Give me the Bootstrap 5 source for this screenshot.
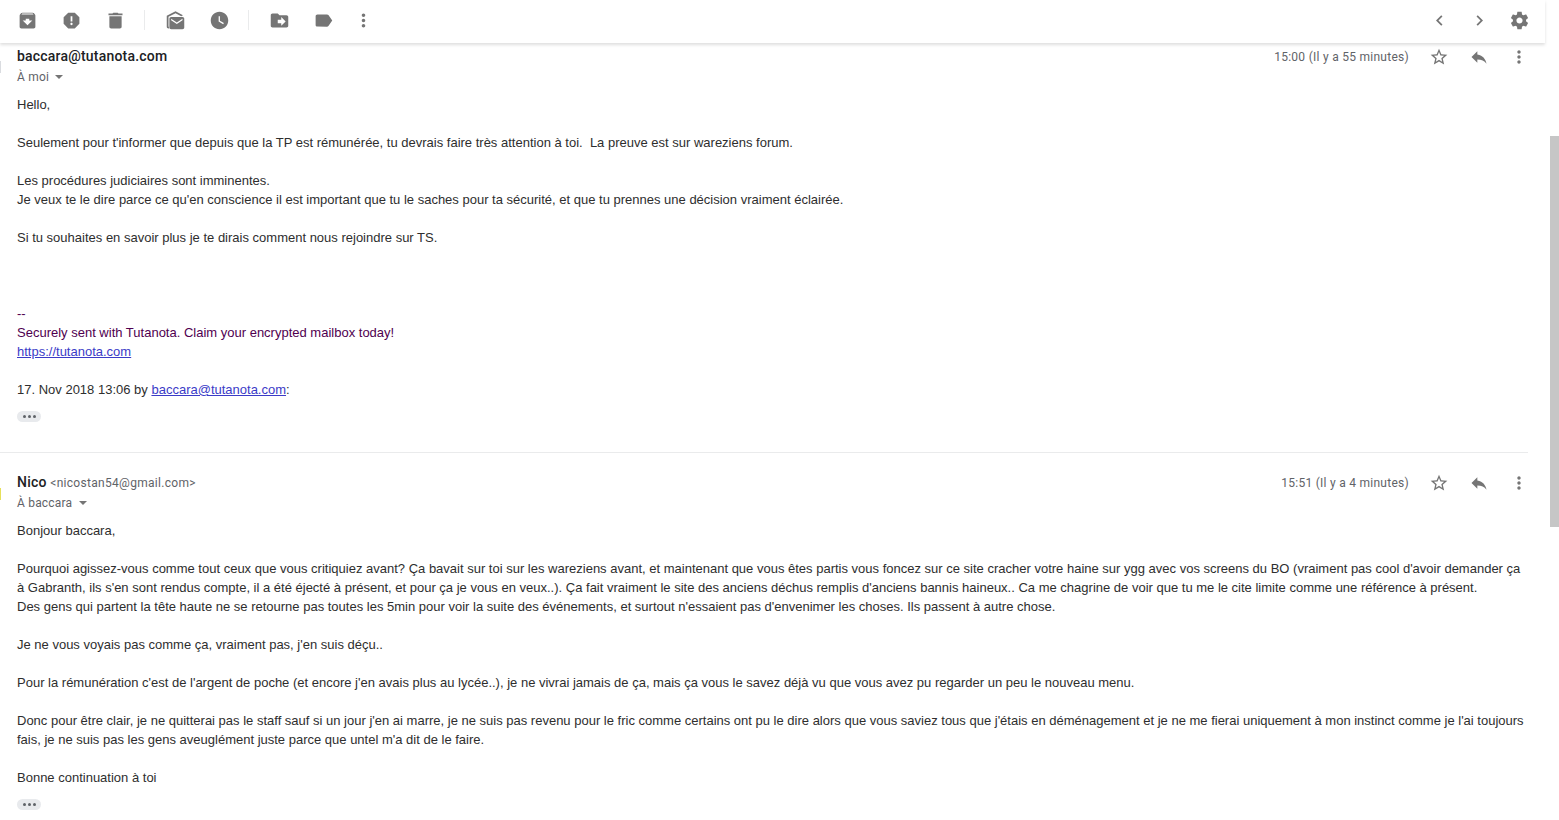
<!DOCTYPE html>
<html lang="fr">

<head>
    <meta charset="UTF-8">
    <title>Boîte de réception</title>
    <meta name="viewport" content="width=device-width, initial-scale=1" />
    <link href="https://cdn.jsdelivr.net/npm/bootstrap@5.3.0/dist/css/bootstrap.min.css" rel="stylesheet">
    <style>
        html, body { height: 100%; overflow: hidden; background: #fff; }
        body { font-family: Roboto, "Liberation Sans", sans-serif; font-size: 12px; color: #222; }
        svg { fill: #757575; display: block; }

        .mail-view { width: 1550px; height: 820px; overflow: hidden; }
        .tool-bar { width: 1545px; height: 43px; padding: 0 6px 3px 7px; box-shadow: 0 2px 3px rgba(0, 0, 0, .13); position: relative; z-index: 2; flex: none; }
        .tool-btn { width: 40px; height: 40px; }
        .tool-btn svg { width: 21px; height: 21px; }
        .tool-gap { margin-right: 4px; }
        .tool-sep { width: 1px; height: 20px; background: #eaebec; margin: 0 10px 0 9px; }

        .mail-item { width: 1528px; position: relative; }
        .mail-first { padding: 3px 0 29px 17px; height: 410px; border-bottom: 1px solid #eaebec; }
        .mail-second { padding: 19px 0 0 17px; }
        .side-mark { position: absolute; left: 0; width: 1px; height: 12px; }
        .mark-grey { top: 18px; background: #dadce0; }
        .mark-yellow { top: 35px; background: #e6e05a; }

        .head-row { height: 20px; margin-right: -11px; }
        .sender { font-size: 14px; font-weight: 500; color: #202124; line-height: 20px; letter-spacing: .2px; }
        .sender-mail { font-size: 12px; color: #5f6368; letter-spacing: .3px; margin-left: 0; font-weight: 400; }
        .mail-time { font-size: 12px; color: #5f6368; letter-spacing: .27px; margin: 1px 10px 0 0; }
        .head-btn { width: 40px; height: 20px; }
        .head-btn svg { width: 20px; height: 20px; margin-top: 1px; }
        .to-line { font-size: 12px; color: #5f6368; line-height: 20px; letter-spacing: .2px; margin-top: 1px; margin-bottom: 8px; }
        .to-caret { display: inline-block; border: 4px solid transparent; border-top: 4px solid #757575; border-bottom: 0; margin-left: 3px; vertical-align: 2px; }

        .mail-body { font-family: "Liberation Sans", Arial, sans-serif; font-size: 13px; line-height: 19px; color: #2e2e2e; padding-right: 3px; }
        .mail-body a { color: #3b3bc7; }
        .signature { color: #500050; }
        .dots-pill { width: 24px; height: 11px; border-radius: 6px; background: #e8eaed; margin-top: 12px; gap: 2px; }
        .dots-pill i { width: 3px; height: 3px; border-radius: 50%; background: #5f6368; display: block; }

        .scroll-rail { width: 9px; height: 820px; }
        .scroll-thumb { height: 391px; margin-top: 136px; background: #c6c6c6; }
    </style>
</head>

<body>

    <svg width="0" height="0" class="position-absolute">
        <symbol id="i-archive" viewBox="0 0 24 24"><path d="M20.54 5.23l-1.39-1.68C18.88 3.21 18.47 3 18 3H6c-.47 0-.88.21-1.16.55L3.46 5.23C3.17 5.57 3 6.02 3 6.5V19c0 1.1.9 2 2 2h14c1.1 0 2-.9 2-2V6.5c0-.48-.17-.93-.46-1.27zM12 17.5L6.5 12H10v-2h4v2h3.5L12 17.5zM5.12 5l.81-1h12l.94 1H5.12z"/></symbol>
        <symbol id="i-report" viewBox="0 0 24 24"><path d="M15.73 3H8.27L3 8.27v7.46L8.27 21h7.46L21 15.73V8.27L15.73 3zM12 17.3c-.72 0-1.3-.58-1.3-1.3 0-.72.58-1.3 1.3-1.3.72 0 1.3.58 1.3 1.3 0 .72-.58 1.3-1.3 1.3zm1-4.3h-2V7h2v6z"/></symbol>
        <symbol id="i-delete" viewBox="0 0 24 24"><path d="M5 19c0 1.100.9 2 2 2h10c1.100 0 2-.9 2-2V7H5v12zM20 4h-4.500l-1-1h-5l-1 1H4v2h16V4z"/></symbol>
        <symbol id="i-read" viewBox="0 0 24 24"><path d="M12 1.5L2 6.6V19c0 1.1.9 2 2 2h.5v-1.9H4V7.8l8-4.1 6.6 3.4 1.9-1L12 1.5z"/><path d="M7 8c-1.1 0-2 .9-2 2v10c0 1.1.9 2 2 2h13c1.1 0 2-.9 2-2V10c0-1.1-.9-2-2-2H7zm6.5 8L7 11.6V10l6.5 4.3L20 10v1.6L13.5 16z"/></symbol>
        <symbol id="i-clock" viewBox="0 0 24 24"><path d="M12 2C6.5 2 2 6.5 2 12s4.5 10 10 10 10-4.500 10-10S17.500 2 12 2zm4.200 14.200L11 13V7h1.500v5.200l4.500 2.700-.8 1.300z"/></symbol>
        <symbol id="i-move" viewBox="0 0 24 24"><path d="M20 6h-8l-2-2H4c-1.100 0-1.990.9-1.990 2L2 18c0 1.100.9 2 2 2h16c1.100 0 2-.9 2-2V8c0-1.100-.9-2-2-2zm-6 12v-3h-4v-4h4V8l5 5-5 5z"/></symbol>
        <symbol id="i-label" viewBox="0 0 24 24"><path d="M17.630 5.840C17.270 5.330 16.670 5 16 5L5 5.010C3.900 5.010 3 5.900 3 7v10c0 1.100.9 1.990 2 1.990L16 19c.67 0 1.270-.33 1.630-.84L22 12l-4.370-6.160z"/></symbol>
        <symbol id="i-more" viewBox="0 0 24 24"><path d="M12 8c1.100 0 2-.9 2-2s-.9-2-2-2-2 .9-2 2 .9 2 2 2zm0 2c-1.100 0-2 .9-2 2s.9 2 2 2 2-.9 2-2-.9-2-2-2zm0 6c-1.100 0-2 .9-2 2s.9 2 2 2 2-.9 2-2-.9-2-2-2z"/></symbol>
        <symbol id="i-prev" viewBox="0 0 24 24"><path d="M15.410 7.410L14 6l-6 6 6 6 1.410-1.410L10.830 12z"/></symbol>
        <symbol id="i-next" viewBox="0 0 24 24"><path d="M10 6L8.590 7.410 13.170 12l-4.580 4.590L10 18l6-6z"/></symbol>
        <symbol id="i-gear" viewBox="0 0 24 24"><path d="M19.430 12.980c.04-.32.07-.64.07-.98s-.03-.66-.07-.98l2.110-1.650c.19-.15.24-.42.12-.64l-2-3.460c-.12-.22-.39-.3-.61-.22l-2.490 1c-.52-.4-1.080-.73-1.690-.98l-.38-2.650C14.460 2.180 14.250 2 14 2h-4c-.25 0-.46.18-.49.42l-.38 2.650c-.61.25-1.170.59-1.690.98l-2.490-1c-.23-.09-.49 0-.61.22l-2 3.460c-.13.22-.07.49.12.64l2.110 1.650c-.04.32-.07.65-.07.98s.03.66.07.98l-2.110 1.650c-.19.15-.24.42-.12.64l2 3.460c.12.22.39.3.61.22l2.490-1c.52.4 1.080.73 1.690.98l.38 2.650c.03.24.24.42.49.42h4c.25 0 .46-.18.49-.42l.38-2.650c.61-.25 1.170-.59 1.690-.98l2.490 1c.23.09.49 0 .61-.22l2-3.460c.12-.22.07-.49-.12-.64l-2.110-1.650zM12 15.500c-1.930 0-3.500-1.570-3.500-3.500s1.570-3.500 3.500-3.500 3.500 1.570 3.500 3.500-1.570 3.500-3.500 3.500z"/></symbol>
        <symbol id="i-star" viewBox="0 0 24 24"><path d="M22 9.240l-7.190-.62L12 2 9.190 8.630 2 9.240l5.460 4.730L5.820 21 12 17.270 18.180 21l-1.630-7.030L22 9.240zM12 15.400l-3.760 2.270 1-4.280-3.320-2.880 4.380-.38L12 6.100l1.710 4.040 4.380.38-3.320 2.880 1 4.280L12 15.400z"/></symbol>
        <symbol id="i-reply" viewBox="0 0 24 24"><path d="M10 9V5l-7 7 7 7v-4.100c5 0 8.500 1.600 11 5.100-1-5-4-10-11-11z"/></symbol>
    </svg>

    <div class="d-flex">
        <div class="mail-view d-flex flex-column">

            <div class="tool-bar d-flex align-items-center bg-white">
                <div class="tool-btn tool-gap d-flex align-items-center justify-content-center"><svg><use href="#i-archive"/></svg></div>
                <div class="tool-btn tool-gap d-flex align-items-center justify-content-center"><svg><use href="#i-report"/></svg></div>
                <div class="tool-btn d-flex align-items-center justify-content-center"><svg><use href="#i-delete"/></svg></div>
                <div class="tool-sep"></div>
                <div class="tool-btn tool-gap d-flex align-items-center justify-content-center"><svg><use href="#i-read"/></svg></div>
                <div class="tool-btn d-flex align-items-center justify-content-center"><svg><use href="#i-clock"/></svg></div>
                <div class="tool-sep"></div>
                <div class="tool-btn tool-gap d-flex align-items-center justify-content-center"><svg><use href="#i-move"/></svg></div>
                <div class="tool-btn d-flex align-items-center justify-content-center"><svg><use href="#i-label"/></svg></div>
                <div class="tool-btn d-flex align-items-center justify-content-center"><svg><use href="#i-more"/></svg></div>
                <div class="tool-btn ms-auto d-flex align-items-center justify-content-center"><svg><use href="#i-prev"/></svg></div>
                <div class="tool-btn d-flex align-items-center justify-content-center"><svg><use href="#i-next"/></svg></div>
                <div class="tool-btn d-flex align-items-center justify-content-center"><svg><use href="#i-gear"/></svg></div>
            </div>

            <div class="mail-item mail-first">
                <span class="side-mark mark-grey"></span>
                <div class="head-row d-flex align-items-center">
                    <div class="sender">baccara@tutanota.com</div>
                    <div class="mail-time ms-auto">15:00 (Il y a 55 minutes)</div>
                    <div class="head-btn d-flex justify-content-center"><svg><use href="#i-star"/></svg></div>
                    <div class="head-btn d-flex justify-content-center"><svg><use href="#i-reply"/></svg></div>
                    <div class="head-btn d-flex justify-content-center"><svg><use href="#i-more"/></svg></div>
                </div>
                <div class="to-line">À moi <span class="to-caret"></span></div>
                <div class="mail-body">
                    Hello,<br><br>
                    Seulement pour t'informer que depuis que la TP est rémunérée, tu devrais faire très attention à toi.&nbsp; La preuve est sur wareziens forum.<br><br>
                    Les procédures judiciaires sont imminentes.<br>
                    Je veux te le dire parce ce qu'en conscience il est important que tu le saches pour ta sécurité, et que tu prennes une décision vraiment éclairée.<br><br>
                    Si tu souhaites en savoir plus je te dirais comment nous rejoindre sur TS.<br><br><br><br>
                    <div class="signature">--<br>Securely sent with Tutanota. Claim your encrypted mailbox today!</div>
                    <a href="#">https://tutanota.com</a><br><br>
                    17. Nov 2018 13:06 by <a href="#">baccara@tutanota.com</a>:
                </div>
                <div class="dots-pill d-flex align-items-center justify-content-center"><i></i><i></i><i></i></div>
            </div>

            <div class="mail-item mail-second">
                <span class="side-mark mark-yellow"></span>
                <div class="head-row d-flex align-items-center">
                    <div class="sender">Nico <span class="sender-mail">&lt;nicostan54@gmail.com&gt;</span></div>
                    <div class="mail-time ms-auto">15:51 (Il y a 4 minutes)</div>
                    <div class="head-btn d-flex justify-content-center"><svg><use href="#i-star"/></svg></div>
                    <div class="head-btn d-flex justify-content-center"><svg><use href="#i-reply"/></svg></div>
                    <div class="head-btn d-flex justify-content-center"><svg><use href="#i-more"/></svg></div>
                </div>
                <div class="to-line">À baccara <span class="to-caret"></span></div>
                <div class="mail-body">
                    Bonjour baccara,<br><br>
                    Pourquoi agissez-vous comme tout ceux que vous critiquiez avant? Ça bavait sur toi sur les wareziens avant, et maintenant que vous êtes partis vous foncez sur ce site cracher votre haine sur ygg avec vos screens du BO (vraiment pas cool d'avoir demander ça à Gabranth, ils s'en sont rendus compte, il a été éjecté à présent, et pour ça je vous en veux..). Ça fait vraiment le site des anciens déchus remplis d'anciens bannis haineux.. Ca me chagrine de voir que tu me le cite limite comme une référence à présent.<br>
                    Des gens qui partent la tête haute ne se retourne pas toutes les 5min pour voir la suite des événements, et surtout n'essaient pas d'envenimer les choses. Ils passent à autre chose.<br><br>
                    Je ne vous voyais pas comme ça, vraiment pas, j'en suis déçu..<br><br>
                    Pour la rémunération c'est de l'argent de poche (et encore j'en avais plus au lycée..), je ne vivrai jamais de ça, mais ça vous le savez déjà vu que vous avez pu regarder un peu le nouveau menu.<br><br>
                    Donc pour être clair, je ne quitterai pas le staff sauf si un jour j'en ai marre, je ne suis pas revenu pour le fric comme certains ont pu le dire alors que vous saviez tous que j'étais en déménagement et je ne me fierai uniquement à mon instinct comme je l'ai toujours fais, je ne suis pas les gens aveuglément juste parce que untel m'a dit de le faire.<br><br>
                    Bonne continuation à toi
                </div>
                <div class="dots-pill d-flex align-items-center justify-content-center"><i></i><i></i><i></i></div>
            </div>

        </div>

        <div class="scroll-rail">
            <div class="scroll-thumb"></div>
        </div>
    </div>

    <script src="https://cdn.jsdelivr.net/npm/bootstrap@5.3.0/dist/js/bootstrap.bundle.min.js"></script>
</body>

</html>
